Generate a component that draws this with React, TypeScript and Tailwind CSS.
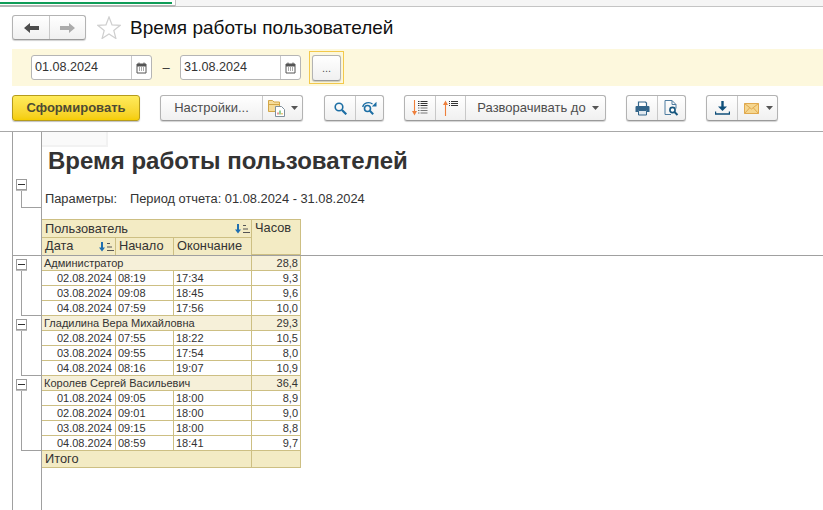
import React from "react";

const Caret = () => (
  <svg width="7" height="4" viewBox="0 0 7 4" className="block"><path d="M0 0h7L3.5 4z" fill="#555" /></svg>
);

const Cal = () => (
  <svg width="11" height="12" viewBox="0 0 11 12" className="block">
    <path d="M1 2h9v9H1z" fill="#fff" stroke="#555" />
    <path d="M1 2h9v2.5H1z" fill="#555" />
    <path d="M3 .5v2M8 .5v2" stroke="#555" />
    <path d="M3 6h1M5 6h1M7 6h1M3 8h1M5 8h1M7 8h1" stroke="#555" />
  </svg>
);

const Sort = () => (
  <svg width="16" height="10" viewBox="0 0 16 10" className="block">
    <path d="M4 0v6" stroke="#1f6fb0" strokeWidth="2" />
    <path d="M1 5.5h6L4 9.5z" fill="#1f6fb0" />
    <path d="M9 1.5h3M9 5h5M9 8.5h7" stroke="#555" />
  </svg>
);

const Lens = () => (
  <svg width="13" height="13" viewBox="0 0 13 13" className="block">
    <circle cx="5" cy="5" r="3.8" fill="none" stroke="#1c6ea4" strokeWidth="1.6" />
    <path d="M8 8l4.3 4.3" stroke="#1c6ea4" strokeWidth="2.2" />
  </svg>
);

const LensNext = () => (
  <svg width="15" height="14" viewBox="0 0 15 14" className="block">
    <circle cx="5.5" cy="7.5" r="3" fill="none" stroke="#1c6ea4" strokeWidth="1.6" />
    <path d="M7.8 9.8l3.4 3.4" stroke="#1c6ea4" strokeWidth="2" />
    <path d="M.7 6C1.5 2 7 .2 10.5 3" fill="none" stroke="#1c6ea4" strokeWidth="1.3" />
    <path d="M14.5 .8v4.7H9.8z" fill="#1c6ea4" />
  </svg>
);

const Folder = () => (
  <svg width="17" height="18" viewBox="0 0 17 18" className="block">
    <path d="M.5 3V1.5h4L6 3h5.5v9.5H.5z" fill="#f6dc9a" stroke="#d3a647" />
    <path d="M.5 5.5h11" stroke="#d3a647" />
    <path d="M7.5 7.5h6l3 3v7h-9z" fill="#fff" stroke="#7f8f9c" />
    <path d="M10 15.5v-2" stroke="#d9534f" strokeWidth="1.2" />
    <path d="M12 15.5v-4" stroke="#4caf50" strokeWidth="1.2" />
    <path d="M14 15.5v-1.5" stroke="#e0a030" strokeWidth="1.2" />
  </svg>
);

const ExpandDown = () => (
  <svg width="16" height="16" viewBox="0 0 16 16" className="block">
    <path d="M2.5 0v12" stroke="#ee7f3b" strokeWidth="1.1" />
    <path d="M0 11h5L2.5 15.5z" fill="#ee7f3b" />
    <path d="M6 1.5h1.500M6 3.500h1.500M6 5.500h1.500M8.500 1.500h7M8.500 3.500h7M8.500 5.500h7" stroke="#333" />
    <path d="M8.500 8h7M8.500 10.500h7M8.500 13h7M6 8h1.500M6 10.500h1.500M6 13h1.500" stroke="#777" />
  </svg>
);

const ExpandUp = () => (
  <svg width="15" height="16" viewBox="0 0 15 16" className="block">
    <path d="M2.5 16V4" stroke="#ee7f3b" strokeWidth="1.100" />
    <path d="M0 5h5L2.500 .5z" fill="#ee7f3b" />
    <path d="M6 1.500h1M6 3.500h1M6 5.500h1M8 1.500h7M8 3.500h7M8 5.500h7" stroke="#333" />
  </svg>
);

const Printer = () => (
  <svg width="15" height="15" viewBox="0 0 15 15" className="block">
    <path d="M3.500 5V1h7l1 1v3" fill="#fff" stroke="#33658a" strokeWidth="1.200" />
    <path d="M1.500 5h12a1 1 0 0 1 1 1v5h-3V9h-8v2H.5V6a1 1 0 0 1 1-1z" fill="#33658a" />
    <path d="M3.500 9.500h8V14h-8z" fill="#dfe8ef" stroke="#33658a" />
  </svg>
);

const Preview = () => (
  <svg width="15" height="16" viewBox="0 0 15 16" className="block">
    <path d="M1 .5h7l4 4v4M1 .5v14h6" fill="none" stroke="#4f7da0" />
    <path d="M8 .5v4h4" fill="none" stroke="#4f7da0" />
    <circle cx="8.500" cy="10" r="2.600" fill="#fff" stroke="#17577f" strokeWidth="1.600" />
    <path d="M10.500 12l3 3" stroke="#17577f" strokeWidth="2" />
  </svg>
);

const Download = () => (
  <svg width="15" height="14" viewBox="0 0 15 14" className="block">
    <path d="M7.500 0v6" stroke="#0f4f7a" strokeWidth="2.400" />
    <path d="M3 5.500h9l-4.500 4.500z" fill="#0f4f7a" />
    <path d="M.5 10.500V13h14v-2.500" fill="none" stroke="#0f4f7a" strokeWidth="1.400" />
  </svg>
);

const Mail = () => (
  <svg width="15" height="11" viewBox="0 0 15 11" className="block">
    <path d="M.5 .5h14v10H.5z" fill="#f5d68f" stroke="#e0a94e" />
    <path d="M.5 .5l7 5.500 7-5.500M.5 10.500L5.500 5M14.500 10.500L9.500 5" fill="none" stroke="#e0a94e" />
  </svg>
);

const Group = ({ className, children }: { className: string; children: React.ReactNode }) => (
  <div className={"flex h-[26px] items-stretch rounded-[3px] border border-[#b3b3b3] border-b-[#9a9a9a] bg-linear-to-b from-white to-[#f0f0f0] shadow-[0_1px_1px_rgba(0,0,0,0.18)] " + className}>
    {children}
  </div>
);

const Seg = ({ className = "", children }: { className?: string; children?: React.ReactNode }) => (
  <div className={"flex items-center justify-center border-l border-[#c8c8c8] first:border-l-0 " + className}>{children}</div>
);

const DateField = ({ value }: { value: string }) => (
  <div className="flex h-[25px] w-[121px] items-stretch rounded-[3px] border border-[#b5b5b5] bg-white">
    <div className="flex w-[99px] items-center pl-[3px] text-[12.6px] text-[#333]">{value}</div>
    <div className="flex flex-1 items-center justify-center border-l border-[#c8c8c8]"><Cal /></div>
  </div>
);

const Toggle = () => (
  <div className="relative ml-[3px] flex h-[11px] w-[11px] items-center justify-center border border-[#9c9c9c] bg-white shadow-[0_1px_0_#bbb]">
    <div className="h-px w-[7px] bg-[#333]" />
  </div>
);

const GutterBlock = ({ h }: { h: string }) => (
  <div className={"flex flex-col pt-[3px] " + h}>
    <Toggle />
    <div className="ml-[8px] w-[20px] flex-1 border-b border-l border-[#a0a0a0]" />
  </div>
);

const cell = "border-r border-b border-[#cdbf83] flex items-center overflow-hidden whitespace-nowrap";

const GroupRow = ({ name, v }: { name: string; v: string }) => (
  <div className="grid h-[15px] grid-cols-[210px_49px] bg-[#f6f0d9] text-[11px] leading-none text-[#333]">
    <div className={cell + " pl-[2px]"}>{name}</div>
    <div className={cell + " justify-end pr-[2px]"}>{v}</div>
  </div>
);

const Row = ({ d, a, b, v }: { d: string; a: string; b: string; v: string }) => (
  <div className="grid h-[15px] grid-cols-[74px_58px_78px_49px] text-[11px] leading-none text-[#333]">
    <div className={cell + " justify-end pr-[3px]"}>{d}</div>
    <div className={cell + " pl-[2px]"}>{a}</div>
    <div className={cell + " pl-[2px]"}>{b}</div>
    <div className={cell + " justify-end pr-[2px]"}>{v}</div>
  </div>
);

const data: { name: string; v: string; rows: string[][] }[] = [
  { name: "Администратор", v: "28,8", rows: [["02.08.2024", "08:19", "17:34", "9,3"], ["03.08.2024", "09:08", "18:45", "9,6"], ["04.08.2024", "07:59", "17:56", "10,0"]] },
  { name: "Гладилина Вера Михайловна", v: "29,3", rows: [["02.08.2024", "07:55", "18:22", "10,5"], ["03.08.2024", "09:55", "17:54", "8,0"], ["04.08.2024", "08:16", "19:07", "10,9"]] },
  { name: "Королев Сергей Васильевич", v: "36,4", rows: [["01.08.2024", "09:05", "18:00", "8,9"], ["02.08.2024", "09:01", "18:00", "9,0"], ["03.08.2024", "09:15", "18:00", "8,8"], ["04.08.2024", "08:59", "18:41", "9,7"]] },
];

export default function App() {
  return (
    <div className="flex h-[510px] w-[823px] flex-col overflow-hidden bg-white font-['Liberation_Sans',Arial,sans-serif] text-[#333]">
      {/* top strip */}
      <div className="flex h-[7px] shrink-0">
        <div className="w-[175px] border-b-2 border-[#b5b5b5] pt-[2px]">
          <div className="h-[2px] w-[172px] bg-[#0f9d58]" />
        </div>
        <div className="flex-1 border-b border-l border-[#c4c4c4] bg-[#f5f5f5]" />
      </div>

      {/* title */}
      <div className="flex h-[42px] shrink-0 items-start pl-[12px] pt-[8px]">
        <Group className="w-[74px] !h-[25px]">
          <Seg className="w-[36px]">
            <svg width="15" height="10" viewBox="0 0 15 10"><path d="M0 5l6-5v3h9v4H6v3z" fill="#4d4d4d" /></svg>
          </Seg>
          <Seg className="flex-1">
            <svg width="15" height="10" viewBox="0 0 15 10"><path d="M15 5L9 0v3H0v4h9v3z" fill="#ababab" /></svg>
          </Seg>
        </Group>
        <svg width="24" height="23" viewBox="0 0 24 23" className="ml-[11px] mt-px block">
          <path d="M12 1l3 7.800 8.200.5-6.400 5.200 2.100 8-6.900-4.500-6.900 4.500 2.100-8L.8 9.300 9 8.800z" fill="#fff" stroke="#cfcfcf" strokeWidth="1.200" />
        </svg>
        <div className="ml-[9px] text-[19px] leading-[26px] text-[#111]">Время работы пользователей</div>
      </div>

      {/* filter band */}
      <div className="ml-[12px] flex h-[37px] shrink-0 items-center bg-[#fdf8dd] pl-[19px]">
        <DateField value="01.08.2024" />
        <div className="w-[28px] text-center text-[13px]">–</div>
        <DateField value="31.08.2024" />
        <div className="ml-[8px] flex h-[33px] w-[35px] items-center justify-center border border-[#f3c94b]">
          <Group className="w-[29px] justify-center pt-[7px] text-[11px] leading-none text-[#555]">...</Group>
        </div>
      </div>

      {/* toolbar */}
      <div className="flex h-[46px] shrink-0 items-start border-b border-[#a8a8a8] pl-[12px] pt-[9px]">
        <div className="flex h-[26px] w-[128px] items-center justify-center rounded-[3px] border border-[#b59b1c] bg-linear-to-b from-[#ffeb5a] to-[#f5cd00] text-[13px] font-bold text-[#4d4a33] shadow-[0_1px_1px_rgba(0,0,0,0.25)]">
          Сформировать
        </div>
        <Group className="ml-[20px] w-[143px] text-[13px] text-[#4d4d4d]">
          <Seg className="w-[101px]">Настройки...</Seg>
          <Seg className="flex-1 justify-start gap-[6px] pl-[5px]"><Folder /><Caret /></Seg>
        </Group>
        <Group className="ml-[21px] w-[60px]">
          <Seg className="w-[30px]"><Lens /></Seg>
          <Seg className="flex-1"><LensNext /></Seg>
        </Group>
        <Group className="ml-[20px] w-[202px] text-[13px] text-[#4d4d4d]">
          <Seg className="w-[30px]"><ExpandDown /></Seg>
          <Seg className="w-[30px]"><ExpandUp /></Seg>
          <Seg className="flex-1 gap-[6px] pl-[5px]">Разворачивать до<Caret /></Seg>
        </Group>
        <Group className="ml-[20px] w-[60px]">
          <Seg className="w-[30px]"><Printer /></Seg>
          <Seg className="flex-1"><Preview /></Seg>
        </Group>
        <Group className="ml-[20px] w-[72px]">
          <Seg className="w-[30px]"><Download /></Seg>
          <Seg className="flex-1 justify-start gap-[7px] pl-[6px]"><Mail /><Caret /></Seg>
        </Group>
      </div>

      {/* report */}
      <div className="ml-[12px] flex min-h-0 flex-1 flex-col border-l border-[#a0a0a0]">
        <div className="flex h-[124px] shrink-0 border-b border-[#a0a0a0]">
          <div className="flex w-[29px] shrink-0 flex-col border-r border-[#a0a0a0] pt-[47px]">
            <Toggle />
            <div className="ml-[8px] h-[18px] w-[20px] border-b border-l border-[#a0a0a0]" />
          </div>
          <div className="flex-1">
            <div className="h-[15px] w-[66px] border-r-2 border-b-2 border-[#f2f2f2] bg-[#fafafa]" />
            <div className="h-[28px] pl-[6px] text-[24px] font-bold leading-[28px] text-[#333]">Время работы пользователей</div>
            <div className="mt-[16px] flex h-[15px] items-center pl-[3px] text-[12.85px] text-[#333]">
              <span className="w-[85px]">Параметры:</span>
              <span>Период отчета: 01.08.2024 - 31.08.2024</span>
            </div>
            <div className="mt-[13px] grid w-[259px] grid-cols-[74px_58px_78px_49px] grid-rows-[18px_17px] border-t border-[#cdbf83] bg-[#f3ebc4] text-[12.8px] leading-none text-[#333]">
              <div className={cell + " col-span-3 justify-between pl-[3px] pr-[1px] pt-[1px]"}>Пользователь<Sort /></div>
              <div className={cell + " row-span-2 items-start pl-[3px] pt-[2px]"}>Часов</div>
              <div className={cell + " justify-between border-b-0 pl-[3px] pr-[1px]"}>Дата<Sort /></div>
              <div className={cell + " border-b-0 pl-[3px]"}>Начало</div>
              <div className={cell + " border-b-0 pl-[3px]"}>Окончание</div>
            </div>
          </div>
        </div>

        <div className="flex min-h-0 flex-1">
          <div className="flex w-[29px] shrink-0 flex-col border-r border-[#a0a0a0]">
            <GutterBlock h="h-[60px]" />
            <GutterBlock h="h-[60px]" />
            <GutterBlock h="h-[75px]" />
          </div>
          <div className="w-[259px]">
            {data.map((g) => (
              <div key={g.name}>
                <GroupRow name={g.name} v={g.v} />
                {g.rows.map((r, i) => (
                  <Row key={i} d={r[0]} a={r[1]} b={r[2]} v={r[3]} />
                ))}
              </div>
            ))}
            <div className="grid h-[17px] grid-cols-[210px_49px] bg-[#f3ebc4] text-[12.8px] leading-none text-[#333]">
              <div className={cell + " pl-[3px] pt-[1px]"}>Итого</div>
              <div className={cell} />
            </div>
          </div>
        </div>
      </div>
    </div>
  );
}
